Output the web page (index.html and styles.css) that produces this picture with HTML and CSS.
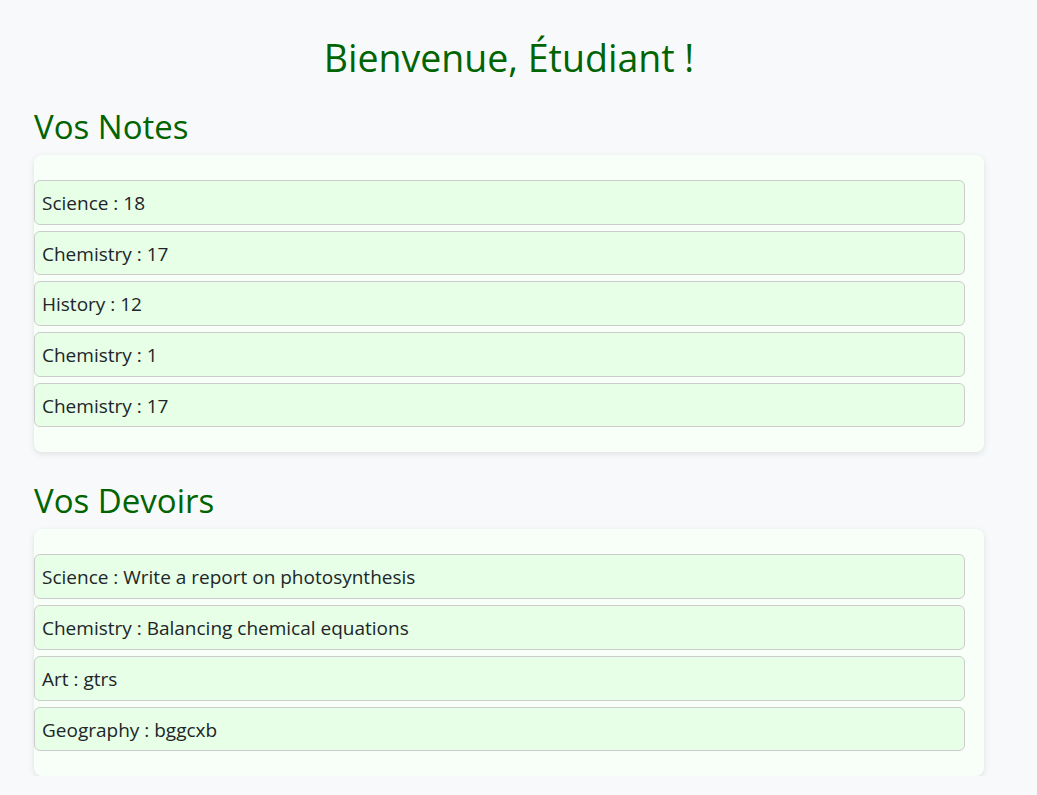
FILE: index.html
```html
<!DOCTYPE html>
<html lang="fr">
<head>
<meta charset="utf-8">
<title>Espace Étudiant</title>
<link rel="stylesheet" href="styles.css">
</head>
<body>
<main class="page">
  <h1 class="title">Bienvenue, Étudiant !</h1>

  <h2 class="section-title">Vos Notes</h2>
  <section class="card">
    <ul class="list">
      <li class="item">Science : 18</li>
      <li class="item">Chemistry : 17</li>
      <li class="item">History : 12</li>
      <li class="item">Chemistry : 1</li>
      <li class="item">Chemistry : 17</li>
    </ul>
  </section>

  <h2 class="section-title">Vos Devoirs</h2>
  <section class="card">
    <ul class="list">
      <li class="item">Science : Write a report on photosynthesis</li>
      <li class="item">Chemistry : Balancing chemical equations</li>
      <li class="item">Art : gtrs</li>
      <li class="item">Geography : bggcxb</li>
    </ul>
  </section>
</main>
</body>
</html>
```

FILE: styles.css
```css
html, body {
  margin: 0;
  padding: 0;
  background: #f8f9fa;
}

body {
  font-family: "Open Sans", "Noto Sans", sans-serif;
  color: #212529;
}

.page {
  width: 950px;
  padding: 34px 0 0 34px;
}

.title {
  margin: 0;
  text-align: center;
  font-size: 37.5px;
  line-height: 48px;
  font-weight: 400;
  color: #006400;
}

.section-title {
  margin: 25px 0 8px;
  font-size: 33px;
  line-height: 40px;
  font-weight: 400;
  color: #006400;
}

.card + .section-title {
  margin-top: 29px;
}

.card {
  background: #f8fff8;
  border-radius: 8px;
  box-shadow: 0 2px 6px rgba(0, 0, 0, 0.1);
  padding: 25px 19px 25px 0;
}

.list {
  list-style: none;
  margin: 0;
  padding: 0;
  display: flex;
  flex-direction: column;
  gap: 6px;
}

.item {
  background: #e6ffe6;
  border: 1px solid #cccccc;
  border-radius: 6px;
  padding: 10px 7px 7.7px;
  font-size: 19px;
  line-height: 25px;
}
```
